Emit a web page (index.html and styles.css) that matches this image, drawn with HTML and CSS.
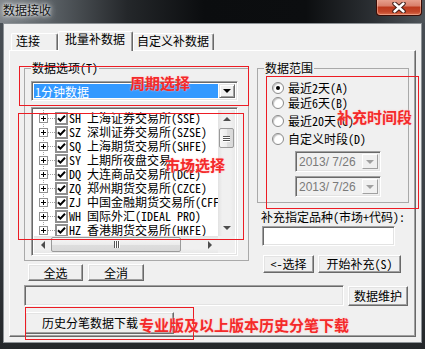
FILE: index.html
```html
<!DOCTYPE html>
<html lang="zh-CN">
<head>
<meta charset="utf-8">
<title>数据接收</title>
<link rel="stylesheet" href="styles.css">
</head>
<body>
<div class="window">
  <div class="titlebar">
    <span class="title">数据接收</span>
    <div class="close">
      <svg width="14" height="11" viewBox="0 0 14 11"><path d="M2.5 1.5 L11.5 9.5 M11.5 1.5 L2.5 9.5" stroke="#3a1a14" stroke-width="4.4" stroke-linecap="round"/><path d="M2.5 1.5 L11.5 9.5 M11.5 1.5 L2.5 9.5" stroke="#fff" stroke-width="2.4" stroke-linecap="round"/></svg>
    </div>
  </div>
  <div class="client">
    <div class="tabs">
      <div class="tab t1">连接</div>
      <div class="tab t2 active">批量补数据</div>
      <div class="tab t3">自定义补数据</div>
    </div>
    <div class="panel">
      <div class="cols">
        <div class="leftcol">
          <fieldset class="group g-left">
            <legend>数据选项(T)</legend>
            <div class="combo sunken">
              <div class="combo-sel">1分钟数据</div>
              <div class="combo-btn raised-sm"><span class="tri-down"></span></div>
            </div>
            <div class="list sunken">
              <div class="tree">
                <div class="row"><span class="plus"></span><span class="conn"></span><span class="chk"><svg width="9" height="9" viewBox="0 0 9 9"><path d="M1 4.2 L3.4 6.6 L8 1.8" fill="none" stroke="#000" stroke-width="2"/></svg></span><span class="lbl">SH 上海证券交易所(SSE)</span></div>
                <div class="row"><span class="plus"></span><span class="conn"></span><span class="chk"><svg width="9" height="9" viewBox="0 0 9 9"><path d="M1 4.2 L3.4 6.6 L8 1.8" fill="none" stroke="#000" stroke-width="2"/></svg></span><span class="lbl">SZ 深圳证券交易所(SZSE)</span></div>
                <div class="row"><span class="plus"></span><span class="conn"></span><span class="chk"><svg width="9" height="9" viewBox="0 0 9 9"><path d="M1 4.2 L3.4 6.6 L8 1.8" fill="none" stroke="#000" stroke-width="2"/></svg></span><span class="lbl">SQ 上海期货交易所(SHFE)</span></div>
                <div class="row"><span class="plus"></span><span class="conn"></span><span class="chk"><svg width="9" height="9" viewBox="0 0 9 9"><path d="M1 4.2 L3.4 6.6 L8 1.8" fill="none" stroke="#000" stroke-width="2"/></svg></span><span class="lbl">SY 上期所夜盘交易</span></div>
                <div class="row"><span class="plus"></span><span class="conn"></span><span class="chk"><svg width="9" height="9" viewBox="0 0 9 9"><path d="M1 4.2 L3.4 6.6 L8 1.8" fill="none" stroke="#000" stroke-width="2"/></svg></span><span class="lbl">DQ 大连商品交易所(DCE)</span></div>
                <div class="row"><span class="plus"></span><span class="conn"></span><span class="chk"><svg width="9" height="9" viewBox="0 0 9 9"><path d="M1 4.2 L3.4 6.6 L8 1.8" fill="none" stroke="#000" stroke-width="2"/></svg></span><span class="lbl">ZQ 郑州期货交易所(CZCE)</span></div>
                <div class="row"><span class="plus"></span><span class="conn"></span><span class="chk"><svg width="9" height="9" viewBox="0 0 9 9"><path d="M1 4.2 L3.4 6.6 L8 1.8" fill="none" stroke="#000" stroke-width="2"/></svg></span><span class="lbl">ZJ 中国金融期货交易所(CFFEX)</span></div>
                <div class="row"><span class="plus"></span><span class="conn"></span><span class="chk"><svg width="9" height="9" viewBox="0 0 9 9"><path d="M1 4.2 L3.4 6.6 L8 1.8" fill="none" stroke="#000" stroke-width="2"/></svg></span><span class="lbl">WH 国际外汇(IDEAL PRO)</span></div>
                <div class="row"><span class="plus"></span><span class="conn"></span><span class="chk"><svg width="9" height="9" viewBox="0 0 9 9"><path d="M1 4.2 L3.4 6.6 L8 1.8" fill="none" stroke="#000" stroke-width="2"/></svg></span><span class="lbl">HZ 香港期货交易所(HKFE)</span></div>
                <div class="row"><span class="plus"></span><span class="conn"></span><span class="chk"><svg width="9" height="9" viewBox="0 0 9 9"><path d="M1 4.2 L3.4 6.6 L8 1.8" fill="none" stroke="#000" stroke-width="2"/></svg></span><span class="lbl">HK 香港联合交易所</span></div>
              </div>
              <div class="vscroll">
                <div class="sb-btn"><span class="tri-up"></span></div>
                <div class="vthumb"><i></i><i></i><i></i></div>
                <div class="sb-track"></div>
                <div class="sb-btn"><span class="tri-down sb"></span></div>
              </div>
              <div class="hscroll">
                <div class="sb-btn h"><span class="tri-left"></span></div>
                <div class="hthumb"><i></i><i></i><i></i></div>
                <div class="sb-track"></div>
                <div class="sb-btn h"><span class="tri-right"></span></div>
              </div>
              <div class="corner"></div>
            </div>
          </fieldset>
          <div class="btnrow">
            <div class="btn b-all">全选</div>
            <div class="btn b-none">全消</div>
          </div>
        </div>
        <div class="rightcol">
          <fieldset class="group g-right">
            <legend>数据范围</legend>
            <div class="radio-row r1"><span class="radio on"></span><span>最近2天(A)</span></div>
            <div class="radio-row r2"><span class="radio"></span><span>最近6天(B)</span></div>
            <div class="radio-row r3"><span class="radio"></span><span>最近20天(C)</span></div>
            <div class="radio-row r4"><span class="radio"></span><span>自定义时段(D)</span></div>
            <div class="date d1 sunken"><span class="date-text">2013/ 7/26</span><span class="date-btn"><span class="tri-down dis"></span></span></div>
            <div class="date d2 sunken"><span class="date-text">2013/ 7/26</span><span class="date-btn"><span class="tri-down dis"></span></span></div>
          </fieldset>
          <div class="spec-label">补充指定品种(市场+代码):</div>
          <div class="input sunken white"></div>
          <div class="btnrow2">
            <div class="btn b-sel">&lt;-选择</div>
            <div class="btn b-start">开始补充(S)</div>
          </div>
        </div>
      </div>
      <div class="statusrow">
        <div class="status sunken"></div>
        <div class="btn b-maint">数据维护</div>
      </div>
      <div class="btn b-dl">历史分笔数据下载</div>
    </div>
  </div>

  <div class="mark m1"></div>
  <div class="mark m2"></div>
  <div class="mark m3"></div>
  <div class="mark m4"></div>
  <div class="note n1">周期选择</div>
  <div class="note n2">市场选择</div>
  <div class="note n3">补充时间段</div>
  <div class="note n4">专业版及以上版本历史分笔下载</div>
</div>
</body>
</html>
```

FILE: styles.css
```css
* { box-sizing: border-box; }
html, body { margin: 0; padding: 0; }
body {
  width: 425px;
  height: 349px;
  overflow: hidden;
  font-family: "Noto Sans Mono CJK SC", "Noto Sans CJK SC", sans-serif;
  font-size: 12px;
  line-height: 14px;
  color: #000;
  background: #2c3034;
}

.window {
  position: relative;
  width: 425px;
  height: 349px;
  display: flex;
  flex-direction: column;
  background: linear-gradient(to bottom, #4a5056 0%, #3a3f44 60%, #24272a 100%);
}

/* ---------- title bar ---------- */
.titlebar {
  height: 23px;
  flex: none;
  display: flex;
  justify-content: space-between;
  align-items: flex-start;
  background: linear-gradient(to right, #80868b 0%, #5a6065 12%, #24272a 30%, #0b0d0f 48%, #0c0e10 72%, #2c3034 88%, #4f555a 100%);
}
.title {
  margin: 3px 0 0 3px;
  color: #111;
  text-shadow: 0 0 3px #fff, 0 0 6px rgba(255,255,255,.85), 0 0 9px rgba(255,255,255,.6);
}
.close {
  width: 46px;
  height: 17px;
  margin: -1px 3px 0 0;
  border: 1px solid #3b0c05;
  border-top: 0;
  border-radius: 0 0 4px 4px;
  background: linear-gradient(to bottom, #e9a592 0%, #d9806b 42%, #bd3a1d 52%, #c4472a 80%, #db7050 100%);
  box-shadow: inset 0 0 0 1px rgba(255,210,190,.45);
  display: flex;
  align-items: center;
  justify-content: center;
}

/* ---------- client ---------- */
.client {
  flex: 1;
  margin: 0 3px 6px 3px;
  background: #f0f0f0;
  border: 1px solid #8d9296;
  padding: 7px 5px 5px 5px;
}

.tabs {
  display: flex;
  align-items: flex-end;
  height: 19px;
  padding-left: 2px;
}
.tab {
  height: 17px;
  border: 1px solid;
  border-color: #fff #696969 transparent #fff;
  border-bottom: 0;
  border-radius: 2px 2px 0 0;
  background: #f0f0f0;
  box-shadow: inset -1px 0 #a0a0a0;
  white-space: nowrap;
}
.t1 { width: 47px; padding-left: 4px; }
.t2 { width: 75px; padding-left: 6px; }
.t3 { width: 81px; padding-left: 3px; }
.tab.active {
  height: 20px;
  margin-bottom: -1px;
  position: relative;
  z-index: 1;
}

.panel {
  height: 287px;
  border: 1px solid;
  border-color: #fff #696969 #696969 #fff;
  box-shadow: inset -1px -1px #a0a0a0;
}

.cols {
  display: flex;
  align-items: flex-start;
  margin: 10px 0 0 14px;
}
.leftcol { width: 225px; flex: none; }
.rightcol { width: 152px; flex: none; margin-left: 8px; }

/* group boxes */
.group {
  margin: 0;
  padding: 0;
  min-width: 0;
  border: 1px solid #a9a9a9;
}
.group legend {
  margin-left: 6px;
  padding: 0 1px;
  line-height: 14px;
}
.g-left { height: 200px; padding-top: 6px; }
.g-right { height: 142px; padding-top: 6px; }

/* 3D borders */
.sunken {
  border: 1px solid;
  border-color: #a0a0a0 #fff #fff #a0a0a0;
  box-shadow: inset 1px 1px #696969, inset -1px -1px #e3e3e3;
}
.white { background: #fff; }

/* combo */
.combo {
  display: flex;
  width: 207px;
  height: 20px;
  margin-left: 6px;
  padding: 2px;
  background: #fff;
}
.combo-sel {
  flex: 1;
  background: #3399ff;
  color: #fff;
  padding-left: 1px;
  margin-right: 1px;
  line-height: 16px;
  white-space: nowrap;
}
.combo-btn {
  width: 16px;
  display: flex;
  align-items: center;
  justify-content: center;
  background: #f0f0f0;
  border: 1px solid;
  border-color: #e3e3e3 #696969 #696969 #e3e3e3;
  box-shadow: inset 1px 1px #fff, inset -1px -1px #a0a0a0;
}

.tri-down, .tri-up, .tri-left, .tri-right {
  display: block;
  width: 0;
  height: 0;
}
.tri-down { border-left: 4px solid transparent; border-right: 4px solid transparent; border-top: 4px solid #000; }
.tri-down.sb { border-top-color: #4d4d4d; }
.tri-down.dis { border-top-color: #a0a0a0; }
.tri-up { border-left: 4px solid transparent; border-right: 4px solid transparent; border-bottom: 4px solid #4d4d4d; }
.tri-left { border-top: 4px solid transparent; border-bottom: 4px solid transparent; border-right: 4px solid #4d4d4d; }
.tri-right { border-top: 4px solid transparent; border-bottom: 4px solid transparent; border-left: 4px solid #4d4d4d; }

/* list */
.list {
  width: 207px;
  height: 149px;
  margin: 6px 0 0 6px;
  padding: 2px;
  background: #fff;
  display: grid;
  grid-template-columns: 1fr 17px;
  grid-template-rows: 1fr 17px;
}
.tree {
  grid-column: 1;
  grid-row: 1;
  overflow: hidden;
  padding-top: 1px;
  background-color: #fff;
  background-image: linear-gradient(to bottom, #a0a0a0 50%, transparent 50%);
  background-size: 1px 2px;
  background-repeat: repeat-y;
  background-position: 9px 0;
}
.row {
  display: flex;
  align-items: center;
  height: 14px;
  white-space: nowrap;
}
.plus {
  flex: none;
  position: relative;
  width: 9px;
  height: 9px;
  margin-left: 5px;
  border: 1px solid #919191;
  background: #fff;
}
.plus::before, .plus::after {
  content: "";
  position: absolute;
  background: #000;
}
.plus::before { left: 1px; top: 3px; width: 5px; height: 1px; }
.plus::after { left: 3px; top: 1px; width: 1px; height: 5px; }
.conn {
  flex: none;
  width: 7px;
  height: 1px;
  background: linear-gradient(to right, #a0a0a0 50%, transparent 50%) 0 0 / 2px 1px repeat-x;
}
.chk {
  flex: none;
  width: 13px;
  height: 13px;
  border: 2px solid #8e8e8e;
  background: #fff;
  display: flex;
  align-items: center;
  justify-content: center;
}
.chk svg { display: block; }
.lbl { margin-left: 1px; }

.vscroll {
  grid-column: 2;
  grid-row: 1;
  display: flex;
  flex-direction: column;
  background: linear-gradient(to right, #e2e2e2, #f0f0f0 25%, #f0f0f0 75%, #e8e8e8);
}
.sb-btn {
  flex: none;
  height: 17px;
  display: flex;
  align-items: center;
  justify-content: center;
}
.sb-btn.h { width: 17px; height: auto; }
.sb-track { flex: 1; }
.vthumb {
  flex: none;
  height: 20px;
  margin: 1px 1px 0;
  border: 1px solid #9a9a9a;
  border-radius: 2px;
  background: linear-gradient(to right, #f6f6f6, #ececec 50%, #dedede 51%, #d9d9d9);
  display: flex;
  flex-direction: column;
  align-items: center;
  justify-content: center;
  gap: 1px;
}
.vthumb i { display: block; width: 7px; height: 1px; background: #555; box-shadow: 0 1px #fff; }
.hscroll {
  grid-column: 1;
  grid-row: 2;
  display: flex;
  background: linear-gradient(to bottom, #e2e2e2, #f0f0f0 25%, #f0f0f0 75%, #e8e8e8);
}
.hthumb {
  flex: none;
  width: 130px;
  margin: 1px 0 1px;
  border: 1px solid #9a9a9a;
  border-radius: 2px;
  background: linear-gradient(to bottom, #f6f6f6, #ececec 50%, #dedede 51%, #d9d9d9);
  display: flex;
  align-items: center;
  justify-content: center;
  gap: 1px;
}
.hthumb i { display: block; width: 1px; height: 7px; background: #555; box-shadow: 1px 0 #fff; }
.corner { grid-column: 2; grid-row: 2; background: #f0f0f0; }

/* buttons */
.btn {
  display: flex;
  align-items: center;
  justify-content: center;
  background: #f0f0f0;
  border: 1px solid;
  border-color: #fff #696969 #696969 #fff;
  box-shadow: inset -1px -1px #a0a0a0, inset 1px 1px #e3e3e3;
  white-space: nowrap;
}
.btnrow { display: flex; margin: 3px 0 0 4px; gap: 5px; }
.b-all { width: 55px; height: 17px; }
.b-none { width: 56px; height: 17px; }

/* right column */
.radio-row {
  display: flex;
  align-items: center;
  height: 14px;
  margin-left: 14px;
  gap: 4px;
  white-space: nowrap;
}
.r1 { margin-top: 0; }
.r2 { margin-top: 1px; }
.r3 { margin-top: 4px; }
.r4 { margin-top: 4px; }
.radio {
  flex: none;
  width: 12px;
  height: 12px;
  border-radius: 50%;
  border: 1px solid #8a8a8a;
  background: #fff;
  box-shadow: inset 1px 1px 1px #c4c4c4;
  display: flex;
  align-items: center;
  justify-content: center;
}
.radio.on::after {
  content: "";
  width: 4px;
  height: 4px;
  border-radius: 50%;
  background: #000;
}
.date {
  display: flex;
  width: 86px;
  height: 21px;
  margin-left: 37px;
  padding: 2px;
  background: #f0f0f0;
  color: #7a7a7a;
  font-family: "Liberation Sans", sans-serif;
  font-size: 12px;
}
.d1 { margin-top: 5px; }
.d2 { margin-top: 4px; }
.date-text { flex: 1; padding-left: 1px; line-height: 16px; white-space: pre; }
.date-btn {
  width: 16px;
  display: flex;
  align-items: center;
  justify-content: center;
  border: 1px solid;
  border-color: #fff #a0a0a0 #a0a0a0 #fff;
}

.spec-label { margin: 7px 0 0 4px; white-space: nowrap; }
.input { width: 133px; height: 20px; margin: 2px 0 0 5px; }
.btnrow2 { display: flex; margin: 9px 0 0 6px; gap: 4px; }
.b-sel { width: 51px; height: 18px; }
.b-start { width: 83px; height: 18px; }

.statusrow {
  display: flex;
  align-items: flex-end;
  margin: 4px 0 0 14px;
}
.status { width: 320px; height: 21px; background: #f0f0f0; }
.b-maint { width: 60px; height: 20px; margin-left: 4px; }
.b-dl {
  width: 149px;
  height: 22px;
  margin: 6px 0 0 15px;
  justify-content: flex-start;
  padding-left: 16px;
}

/* annotations */
.mark { position: absolute; border: 1px solid #ec1c24; }
.m1 { left: 19px; top: 66px; width: 230px; height: 40px; }
.m2 { left: 18px; top: 113px; width: 226px; height: 127px; }
.m3 { left: 266px; top: 76px; width: 153px; height: 133px; }
.m4 { left: 25px; top: 307px; width: 169px; height: 33px; }
.note {
  position: absolute;
  font-family: "Noto Sans CJK SC", sans-serif;
  font-size: 15px;
  line-height: 15px;
  font-weight: bold;
  color: #f42a2a;
  text-shadow: 0 0 2px #ffc0c0;
  white-space: nowrap;
}
.n1 { left: 130px; top: 75px; }
.n2 { left: 165px; top: 157px; }
.n3 { left: 337px; top: 109px; }
.n4 { left: 139px; top: 317px; }
```
